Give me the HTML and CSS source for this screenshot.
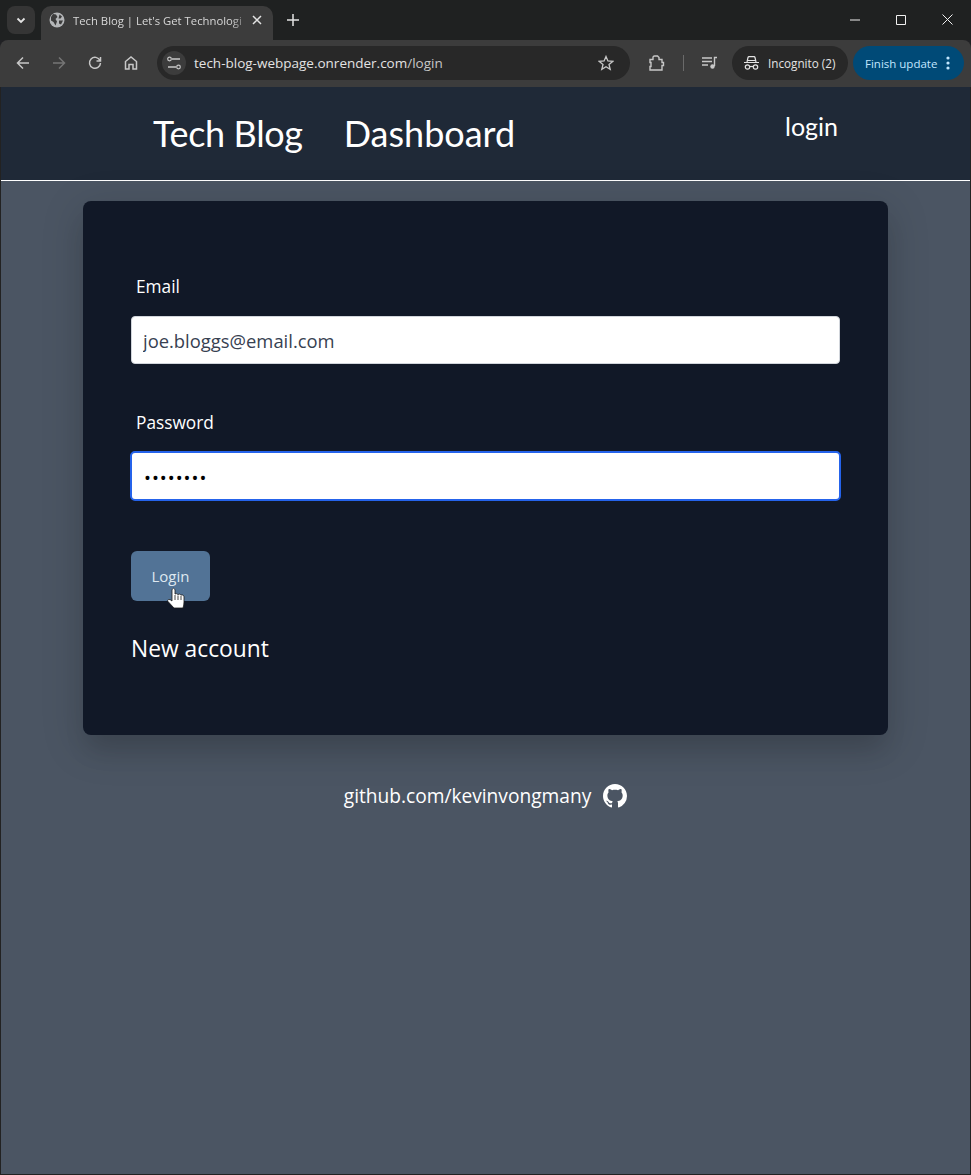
FILE: index.html
```html
<!DOCTYPE html>
<html lang="en">
<head>
  <meta charset="UTF-8" />
  <meta name="viewport" content="width=device-width, initial-scale=1.0"/>
  <title>Tech Blog | Let's Get Technological</title>
  <link rel="stylesheet" href="styles.css">
</head>
<body>

  <div class="tabstrip">
    <div class="tab-search">
      <svg width="12" height="12" viewBox="0 0 12 12"><path d="M2.500 4.500 6 8l3.500-3.500" fill="none" stroke="#e3e3e3" stroke-width="1.800"/></svg>
    </div>
    <div class="tab">
      <svg class="tab-globe" width="16" height="16" viewBox="0 0 16 16">
        <circle cx="8" cy="8" r="7.500" fill="#b4b6b8"/>
        <path d="M4 2 7 2.500 8.500 5 6.500 7 8 9.500 6.500 13.500 4.500 10 2 8.500 2 5zM10.500 2.500l2.500 2-1.500 2H9.500zM10 8.500h4l-2 4-2-1z" fill="#3c3c3c"/>
      </svg>
      <span class="tab-title">Tech Blog | Let's Get Technologi</span>
      <svg width="10" height="10" viewBox="0 0 10 10"><path d="M1 1l8 8M9 1 1 9" stroke="#e3e3e3" stroke-width="1.500"/></svg>
    </div>
    <svg class="new-tab" width="12" height="12" viewBox="0 0 12 12"><path d="M6 0v12M0 6h12" stroke="#e3e3e3" stroke-width="1.500"/></svg>
    <div class="window-btns">
      <svg width="10" height="10" viewBox="0 0 10 10"><path d="M0 5h10" stroke="#f0f0f0"/></svg>
      <svg width="10" height="10" viewBox="0 0 10 10"><path d="M.5.500h9v9h-9z" fill="none" stroke="#f0f0f0"/></svg>
      <svg width="11" height="11" viewBox="0 0 11 11"><path d="M.5.500l10 10M10.500.500l-10 10" stroke="#f0f0f0"/></svg>
    </div>
  </div>

  <div class="toolbar">
    <svg class="tool" width="16" height="16" viewBox="0 0 16 16"><path d="M14 8H2.500M8 2.500 2.500 8 8 13.500" fill="none" stroke="#c7c7c7" stroke-width="1.500"/></svg>
    <svg class="tool" width="16" height="16" viewBox="0 0 16 16"><path d="M2 8h11.500M8 2.500 13.500 8 8 13.500" fill="none" stroke="#757575" stroke-width="1.500"/></svg>
    <svg class="tool" width="16" height="16" viewBox="0 0 16 16"><path d="M13 5.500A5.500 5.500 0 1 0 13.500 8M13.500 2v4h-4" fill="none" stroke="#c7c7c7" stroke-width="1.500"/></svg>
    <svg class="tool" width="16" height="16" viewBox="0 0 16 16"><path d="M2.500 14V6.500L8 2l5.500 4.500V14H10V9.500H6V14z" fill="none" stroke="#c7c7c7" stroke-width="1.500"/></svg>

    <div class="omnibox">
      <div class="site-info">
        <svg width="14" height="14" viewBox="0 0 14 14">
          <path d="M5 3h8M1 11h8" stroke="#c7c7c7" stroke-width="1.300"/>
          <circle cx="2.500" cy="3" r="1.800" fill="none" stroke="#c7c7c7" stroke-width="1.200"/>
          <circle cx="11.500" cy="11" r="1.800" fill="none" stroke="#c7c7c7" stroke-width="1.200"/>
        </svg>
      </div>
      <span class="url">tech-blog-webpage.onrender.com<span class="url-path">/login</span></span>
      <svg class="star" width="16" height="16" viewBox="0 0 16 16"><path d="M8 1.500 9.900 6l4.800.400-3.700 3.100 1.200 4.800L8 11.700l-4.200 2.600L5 9.500 1.300 6.400 6.100 6z" fill="none" stroke="#c7c7c7" stroke-width="1.300"/></svg>
    </div>

    <svg class="extensions" width="17" height="17" viewBox="0 0 17 17"><path d="M2 4.500h3V2.500q0-1.500 1.500-1.500h3L11 2.500v2h3v3h1.500v3H14V15H2v-3.500h1v-4H2z" fill="none" stroke="#c7c7c7" stroke-width="1.400"/></svg>
    <div class="divider"></div>
    <svg class="media" width="16" height="14" viewBox="0 0 16 14"><path d="M0 2h10M0 5.500h10M0 9h6M12.500 10V1.500H15" fill="none" stroke="#c7c7c7" stroke-width="1.400"/><circle cx="10.500" cy="10.500" r="2.200" fill="#c7c7c7"/></svg>

    <div class="incognito">
      <svg width="15" height="14" viewBox="0 0 15 14">
        <path d="M0 6.500h15M3 6l1-4.500q.200-.800 1-.800h5q.800 0 1 .800L12 6M3.500 4.500h8" fill="none" stroke="#e3e3e3" stroke-width="1.200"/>
        <circle cx="3.500" cy="11" r="2.200" fill="none" stroke="#e3e3e3" stroke-width="1.200"/>
        <circle cx="11.500" cy="11" r="2.200" fill="none" stroke="#e3e3e3" stroke-width="1.200"/>
        <path d="M5.700 10.500h3.600" stroke="#e3e3e3" stroke-width="1.200"/>
      </svg>
      <span>Incognito (2)</span>
    </div>
    <div class="finish-update">
      <span>Finish update</span>
      <svg width="4" height="14" viewBox="0 0 4 14" fill="#c2e7ff"><circle cx="2" cy="2" r="1.600"/><circle cx="2" cy="7" r="1.600"/><circle cx="2" cy="12" r="1.600"/></svg>
    </div>
  </div>

  <div class="page">
    <header class="site-header">
      <nav class="main-nav">
        <a class="brand" href="#">Tech Blog</a>
        <a href="#">Dashboard</a>
      </nav>
      <a class="login-link" href="#">login</a>
    </header>

    <section class="login-card">
      <form class="login-form">
        <label for="email">Email</label>
        <input type="text" id="email" class="email-input" value="joe.bloggs@email.com" />

        <label for="password" class="password-label">Password</label>
        <input type="password" id="password" class="password-input" value="12345678" />

        <div class="btn-wrap">
          <button type="button">Login</button>
          <svg class="cursor" width="18" height="22" viewBox="0 0 18 22">
            <path d="M5 2.500q1.500-2.500 3 0V7q1.500-1 3 .500q1.500-1 3 .500q2-.500 3 1.200V15q0 3-1 6H7L1 14.500q-1-1.500.500-2q1.500-.500 3.500 1.500z" fill="#fff" stroke="#1a1a1a" stroke-width=".800"/>
            <path d="M8 8v5M11 8.500v4.500M14 9v4" stroke="#1a1a1a" stroke-width=".800"/>
          </svg>
        </div>
      </form>
      <a class="new-account" href="#">New account</a>
    </section>

    <footer class="site-footer">
      <a href="#">github.com/kevinvongmany</a>
      <svg width="24" height="24" viewBox="0 0 16 16" fill="#fff"><path d="M8 0C3.580 0 0 3.580 0 8c0 3.540 2.290 6.530 5.470 7.590.400.070.550-.170.550-.380 0-.190-.010-.820-.010-1.490-2.010.370-2.530-.490-2.690-.940-.090-.230-.480-.940-.820-1.130-.280-.150-.680-.520-.010-.530.630-.010 1.080.580 1.230.820.720 1.210 1.870.870 2.330.660.070-.520.280-.870.510-1.070-1.780-.200-3.640-.890-3.640-3.950 0-.870.310-1.590.820-2.150-.080-.200-.360-1.020.080-2.120 0 0 .670-.210 2.200.820.640-.180 1.320-.270 2-.270s1.360.090 2 .270c1.530-1.040 2.200-.820 2.200-.820.440 1.100.160 1.920.080 2.120.510.560.820 1.270.820 2.150 0 3.070-1.870 3.750-3.650 3.950.290.250.540.730.540 1.480 0 1.070-.010 1.930-.010 2.200 0 .210.150.460.550.380A8.010 8.010 0 0 0 16 8c0-4.420-3.580-8-8-8z"/></svg>
    </footer>
  </div>

</body>
</html>
```

FILE: styles.css
```css
* {
  box-sizing: border-box;
}

html, body {
  height: 100%;
}

body {
  margin: 0;
  display: flex;
  flex-direction: column;
  font-family: 'Open Sans', sans-serif;
  background-color: #202124;
  overflow: hidden;
}

a {
  color: #fff;
  text-decoration: none;
}

/* browser chrome */
.tabstrip {
  height: 40px;
  flex: none;
  display: flex;
  align-items: flex-start;
  padding: 6px 0 0 7px;
  background-color: #1f2121;
}

.tab-search {
  width: 28px;
  height: 28px;
  margin-right: 6px;
  display: flex;
  align-items: center;
  justify-content: center;
  background: #353535;
  border-radius: 8px;
}

.tab {
  width: 232px;
  height: 34px;
  display: flex;
  align-items: center;
  padding: 0 11px 6px 8px;
  background: #3c3c3c;
  border-radius: 10px 10px 0 0;
}

.tab-globe {
  flex: none;
  margin-right: 8px;
}

.tab-title {
  flex: 1;
  white-space: nowrap;
  color: #d8d8d8;
  font-size: 11.300px;
  -webkit-mask-image: linear-gradient(to right, #000 88%, transparent 100%);
  mask-image: linear-gradient(to right, #000 88%, transparent 100%);
}

.new-tab {
  margin: 8px 0 0 14px;
}

.window-btns {
  margin-left: auto;
  display: flex;
  align-items: center;
  gap: 36px;
  padding: 8px 18px 0 0;
}

.toolbar {
  height: 47px;
  flex: none;
  display: flex;
  align-items: center;
  padding: 0 7px 1px 0;
  background: #3c3c3c;
  border-radius: 8px 8px 0 0;
}

.tool {
  flex: none;
  margin-left: 15px;
  margin-right: 5px;
}

.omnibox {
  width: 473px;
  height: 34px;
  margin-left: 13px;
  display: flex;
  align-items: center;
  padding: 0 16px 0 5px;
  background: #282828;
  border-radius: 17px;
}

.site-info {
  width: 24px;
  height: 24px;
  margin-right: 8px;
  display: flex;
  align-items: center;
  justify-content: center;
  background: #3c3c3c;
  border-radius: 50%;
}

.url {
  flex: 1;
  color: #e3e3e3;
  font-size: 13.500px;
}

.url-path {
  color: #c7c7c7;
}

.extensions {
  margin-left: 18px;
}

.divider {
  width: 1px;
  height: 16px;
  margin: 0 18px;
  background: #6a6a6a;
}

.media {
  margin-right: 14px;
}

.incognito {
  width: 116px;
  height: 34px;
  display: flex;
  align-items: center;
  gap: 9px;
  padding-left: 12px;
  background: #282828;
  border-radius: 17px;
  color: #e3e3e3;
  font-size: 11.700px;
}

.finish-update {
  width: 111px;
  height: 34px;
  margin-left: 5px;
  display: flex;
  align-items: center;
  justify-content: space-between;
  padding: 0 14px 0 12px;
  background: #004a77;
  border-radius: 17px;
  color: #c2e7ff;
  font-size: 11.500px;
}

/* page */
.page {
  flex: 1;
  background-color: #4b5563;
  border-left: 1px solid #222;
  border-right: 1px solid #222;
  border-bottom: 1px solid #222;
}

.site-header {
  height: 94px;
  display: flex;
  justify-content: space-between;
  padding: 21px 132px 0 152px;
  background-color: #1f2937;
  border-bottom: 1px solid #fff;
}

.main-nav {
  display: flex;
  gap: 41px;
  font-family: 'Lato', sans-serif;
  font-size: 36px;
  line-height: 50px;
}

.brand {
  letter-spacing: -0.35px;
}

.login-link {
  font-family: 'Lato', sans-serif;
  font-size: 25px;
  line-height: 36px;
}

.login-card {
  width: 805px;
  height: 534px;
  margin: 20px 0 0 82px;
  padding: 71px 48px 0;
  background-color: #111827;
  border-radius: 8px;
  box-shadow: 0 20px 25px -5px rgba(0, 0, 0, 0.1), 0 10px 40px 5px rgba(0, 0, 0, 0.12);
}

.login-form {
  display: flex;
  flex-direction: column;
  align-items: flex-start;
}

label {
  margin-left: 5px;
  margin-bottom: 14px;
  color: #fff;
  font-size: 17.300px;
  line-height: 30px;
}

.password-label {
  margin-bottom: 13px;
}

input {
  width: 100%;
  padding: 0 11px;
  border: 1px solid #d1d5db;
  border-radius: 4px;
  background: #fff;
  color: #374151;
  font-family: 'Open Sans', sans-serif;
  font-size: 18.400px;
  outline: none;
}

.email-input {
  height: 48px;
  margin-bottom: 44px;
}

.password-input {
  width: calc(100% + 2px);
  height: 50px;
  margin: 0 0 50px -1px;
  padding-top: 3px;
  padding-left: 12px;
  border: 2px solid #2563eb;
  border-radius: 5px;
  color: #000;
  letter-spacing: 1px;
}

.btn-wrap {
  position: relative;
}

button {
  display: block;
  width: 79px;
  height: 50px;
  background-color: #527396;
  color: #dfe8f0;
  border: none;
  border-radius: 6px;
  font-family: 'Open Sans', sans-serif;
  font-size: 15px;
}

.cursor {
  position: absolute;
  left: 36px;
  top: 36px;
}

.new-account {
  display: block;
  margin-top: 30px;
  font-size: 22.800px;
  line-height: 36px;
}

.site-footer {
  display: flex;
  align-items: center;
  justify-content: center;
  gap: 12px;
  margin-top: 45px;
  font-size: 19.150px;
  line-height: 32px;
}
```
